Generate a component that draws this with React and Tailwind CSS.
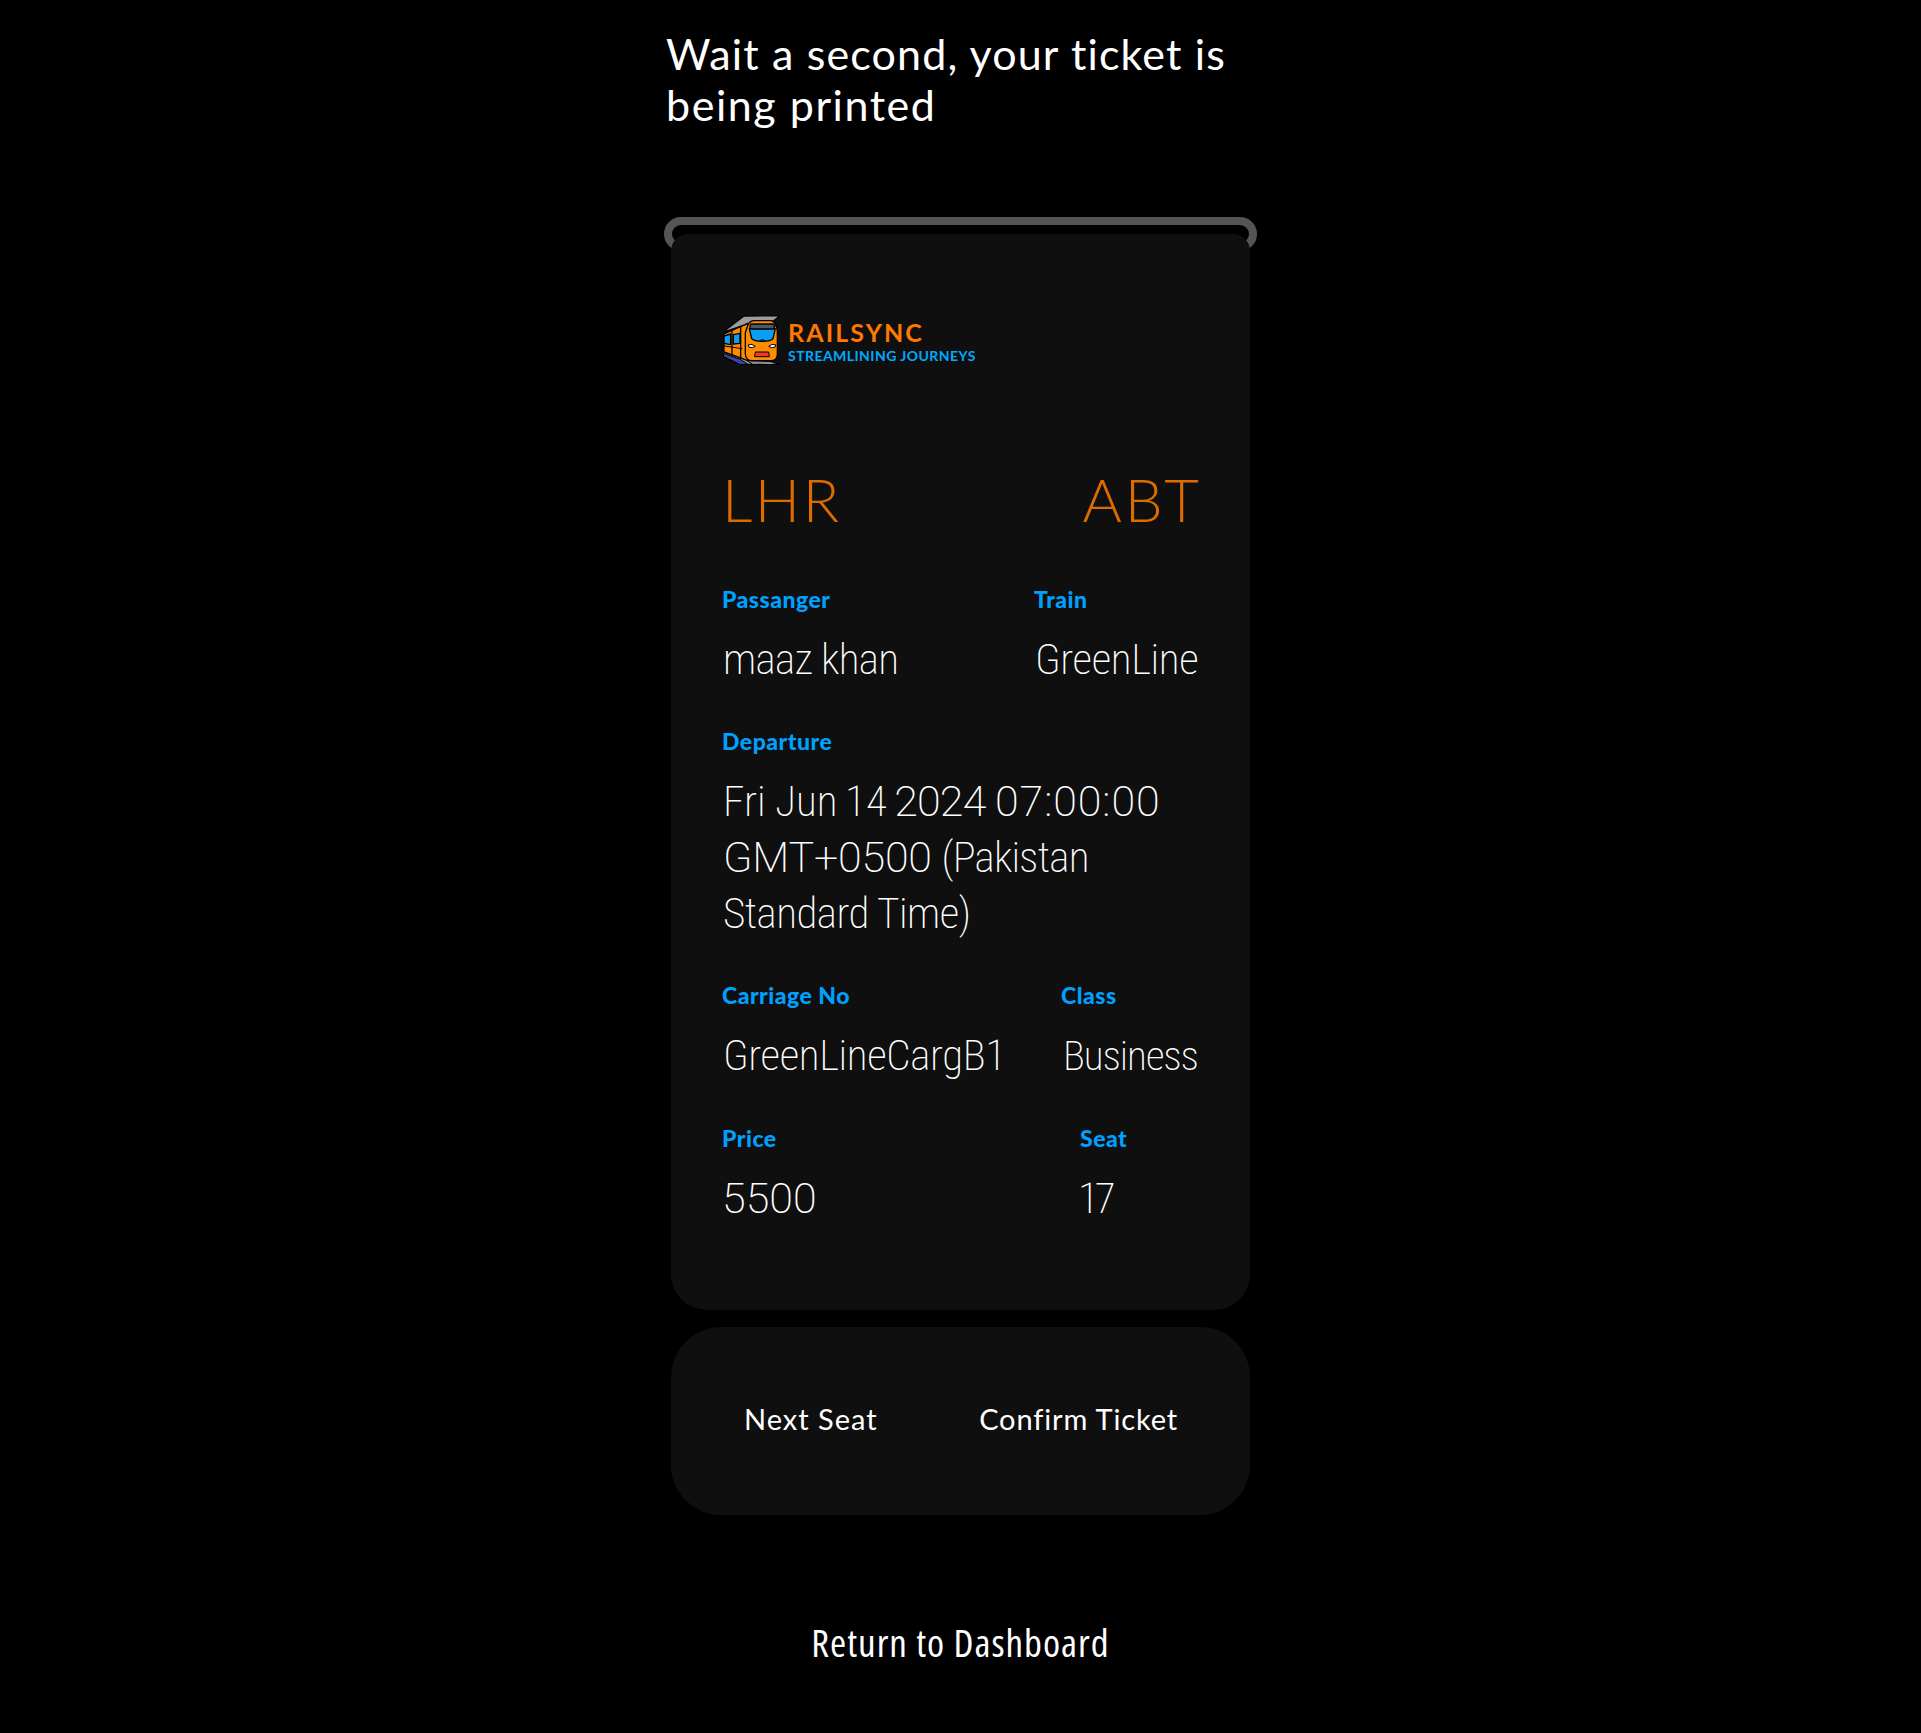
import React from "react";

function TrainIcon() {
  return (
    <svg className="h-[54px] w-[62px] shrink-0" viewBox="0 0 186 162" strokeLinejoin="round" strokeLinecap="round">
      <path d="M8 61 L72 12 L180 11 L160 27 L84 36 Z" fill="#9c9c9c" stroke="#000" strokeWidth="4" />
      <path d="M62 132 L90 146 L152 148 L178 157 L96 158 Z" fill="#8d8d93" stroke="#000" strokeWidth="4" />
      <path d="M10 122 L10 134 L58 157 L90 158 L62 138 Z" fill="#3b45a8" stroke="#000" strokeWidth="4" />
      <path d="M8 116 L62 132 L98 157 L84 157 L60 142 L10 124 Z" fill="#8d8d93" stroke="#000" strokeWidth="3" />
      <path d="M12 66 L84 34 L84 146 L12 120 Z" fill="#ff8c00" stroke="#000" strokeWidth="4" />
      <path d="M12 72 L32 66 V98 L12 94 Z M40 68 L60 64 V94 L40 96 Z" fill="#0a9ff5" stroke="#000" strokeWidth="4" />
      <path d="M36 56 V130 M62 46 V138" stroke="#000" strokeWidth="4" />
      <path d="M14 102 L66 110" stroke="#000" strokeWidth="3" />
      <path d="M84 38 Q90 26 104 26 H154 Q167 30 172 56 V128 Q171 146 152 146 H96 Q78 146 76 126 V62 Z" fill="#ff8c00" stroke="#000" strokeWidth="4" />
      <path d="M88 50 H166 L159 80 Q153 88 127 88 Q102 88 95 80 Z" fill="#0a9ff5" stroke="#000" strokeWidth="4" />
      <path d="M119 87 Q127 78 135 87 Z" fill="#4b5a66" stroke="#000" strokeWidth="3" />
      <rect x="90" y="36" width="73" height="15" rx="5" fill="#4b5a66" stroke="#000" strokeWidth="4" />
      <path d="M86 98 Q96 94 106 103 Q98 110 88 106 Z" fill="#fff" stroke="#000" strokeWidth="3" />
      <path d="M166 98 Q156 94 146 103 Q154 110 164 106 Z" fill="#fff" stroke="#000" strokeWidth="3" />
      <path d="M107 120 H146 L148 134 H105 Z" fill="#f0382e" stroke="#000" strokeWidth="3" />
    </svg>
  );
}

function Field({ label, className, children }) {
  return (
    <div className={className}>
      <div className="text-[23px] leading-[26px] font-black tracking-[0.5px] whitespace-nowrap text-[#00a0ff]">{label}</div>
      <div className="mt-[19px] pl-px font-['Roboto',sans-serif] text-[43px] leading-[56px] font-[200] whitespace-nowrap text-white font-stretch-[75%]">
        {children}
      </div>
    </div>
  );
}

export default function App() {
  return (
    <main className="flex min-h-[1733px] flex-col items-center bg-black pt-[28px] font-['Lato',sans-serif] text-white">
      <div className="flex w-[593px] flex-col items-center">
        <h1 className="w-full pl-[2px] text-[43px] leading-[51px] tracking-[1.15px] whitespace-nowrap">
          Wait a second, your ticket is
          <br />
          <span className="tracking-[1.55px]">being printed</span>
        </h1>
        <div className="mt-[87px] h-[34px] w-full rounded-[17px] border-8 border-[#555]" />
        <section className="z-10 -mt-[17px] h-[1076px] w-[579px] rounded-t-[17px] rounded-b-[36px] bg-[#0f0f0f] px-[51px] pt-[78px]">
          <div className="-ml-[2px] flex h-[54px]">
            <TrainIcon />
            <div className="ml-[6px] pt-[6px]">
              <div className="text-[25px] leading-[28px] font-bold tracking-[2.1px] text-[#ff7800]">RAILSYNC</div>
              <div className="mt-px text-[14px] leading-[18px] font-bold tracking-[0.45px] text-[#00aaff]">STREAMLINING JOURNEYS</div>
            </div>
          </div>
          <div className="mt-[97px] flex justify-between text-[60px] leading-[72px] font-light text-[#dd6b00]">
            <span className="tracking-[2.5px]">LHR</span>
            <span className="-mr-[3px] tracking-[3px]">ABT</span>
          </div>
          <div className="mt-[51px] flex flex-col gap-[41px]">
            <div className="flex justify-between">
              <Field label="Passanger"><span className="tracking-[-0.7px]">maaz khan</span></Field>
              <Field label="Train" className="w-[165px]"><span className="tracking-[-0.4px]">GreenLine</span></Field>
            </div>
            <Field label="Departure">
              <div>
                Fri Jun <span className="-ml-[2px]">14</span>{" "}
                <span className="-ml-[2px] tracking-[-0.9px] font-stretch-[100%]">2024</span>{" "}
                <span className="tracking-[0.9px] font-stretch-[100%]">07:00:00</span>
              </div>
              <div>
                <span className="tracking-[-0.2px] font-stretch-[89%]">GMT+0500</span> <span className="tracking-[-0.8px]">(Pakistan</span>
              </div>
              <div className="tracking-[-0.55px]">Standard Time)</div>
            </Field>
            <div className="flex justify-between">
              <Field label="Carriage No"><span className="tracking-[-0.4px]">GreenLineCargB1</span></Field>
              <Field label="Class" className="w-[138px]"><span className="ml-px text-[41px] tracking-[-1px]">Business</span></Field>
            </div>
            <div className="flex justify-between">
              <Field label="Price"><span className="-ml-px font-stretch-[97%]">5500</span></Field>
              <Field label="Seat" className="w-[119px]"><span className="-ml-[3px] tracking-[-4px]">17</span></Field>
            </div>
          </div>
        </section>
        <section className="mt-[17px] flex h-[188px] w-[579px] items-start justify-between rounded-[50px] bg-[#0f0f0f] pt-[74px] pr-[72px] pl-[73px] text-[29px] leading-[36px]">
          <button className="tracking-[1px]">Next Seat</button>
          <button className="tracking-[0.85px]">Confirm Ticket</button>
        </section>
      </div>
      <a className="mt-[100px] font-['Open_Sans',sans-serif] text-[39px] leading-[53px] tracking-[1px] font-stretch-[75%]">Return to Dashboard</a>
    </main>
  );
}
